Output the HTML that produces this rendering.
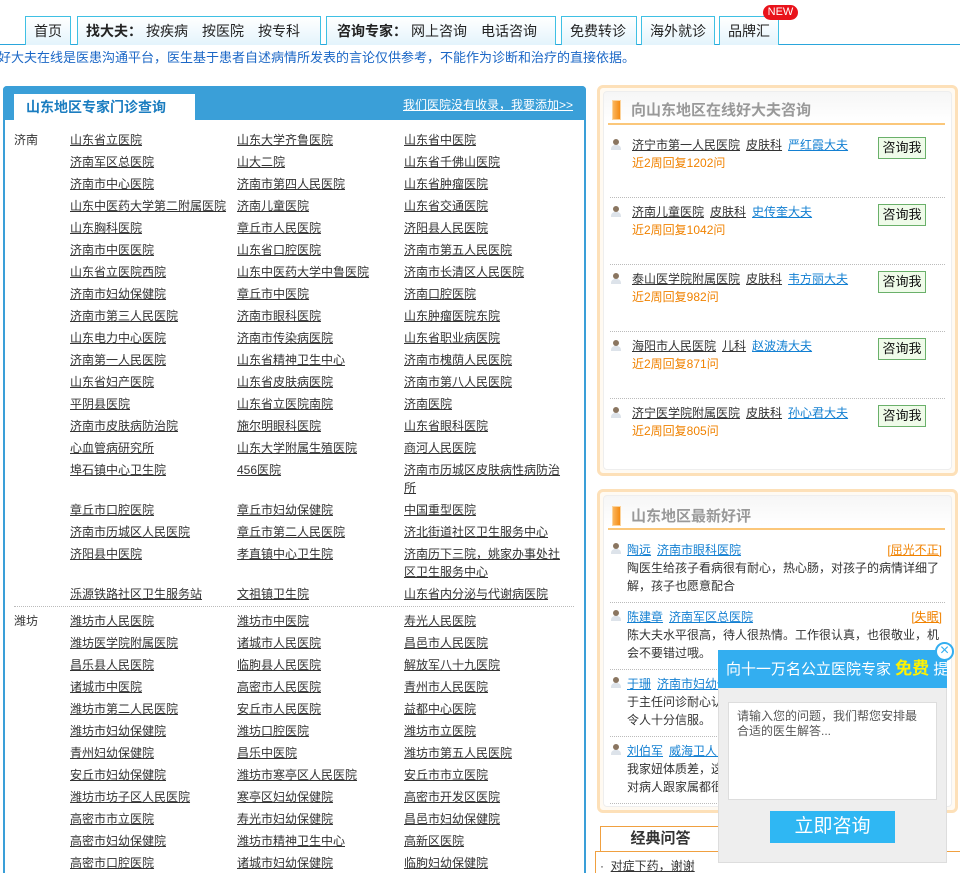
<!DOCTYPE html>
<html><head><meta charset="utf-8">
<style>
*{margin:0;padding:0;box-sizing:border-box}
html{width:960px;height:873px;overflow:hidden}
body{width:960px;height:873px;overflow:hidden;background:#fff;font-family:"Liberation Sans","Noto Sans CJK SC",sans-serif;font-size:12px;color:#333;position:relative}
.abs{position:absolute}
.nav{position:absolute;top:44px;left:0;width:960px;height:1px;background:#2aa6dc}
.tab{position:absolute;top:16px;height:29px;border:1px solid #3fc0e4;border-bottom:none;background:linear-gradient(#fff,#e4f4fc);font-size:14px;line-height:28px;color:#222;padding-left:8px;white-space:nowrap}
.tab b{font-weight:bold}
.tab span{margin-right:14px}
.new{position:absolute;left:763px;top:5px;width:35px;height:15px;background:#e9131b;border-radius:8px;color:#fff;font-size:11px;line-height:15px;text-align:center}
.disc{position:absolute;left:-2px;top:48px;font-size:13px;color:#1b67c6;line-height:20px;white-space:nowrap}
.lp{position:absolute;left:3px;top:86px;width:583px;height:830px;border:2px solid #3a9fd8;border-radius:4px;background:#fff}
.lph{position:absolute;left:3px;top:86px;width:583px;height:34px;background:#3a9fd8;border-radius:4px 4px 0 0}
.lpt{position:absolute;left:14px;top:94px;width:181px;height:27px;background:#fff;color:#1b7dc0;font-size:14px;font-weight:bold;line-height:27px;padding-left:12px}
.lpl{position:absolute;left:403px;top:96px;color:#fff;text-decoration:underline;font-size:12px}
.r{position:absolute;left:0;width:580px;height:18px;line-height:18px}
.r a{position:absolute;color:#333;text-decoration:underline}
.r .c1{left:70px}.r .c2{left:237px}.r .c3{left:404px;width:160px}
.lbl{position:absolute;left:14px;color:#333}
.sep{position:absolute;left:14px;top:606px;width:560px;border-top:1px dotted #bbb}
.rp{position:absolute;left:597px;width:361px;border:3px solid #fde0b8;border-radius:6px;background:#fffaf2}
.rpi{position:absolute;left:3px;top:3px;right:3px;bottom:3px;background:linear-gradient(#f6f6f6,#fff 30px);border:1px solid #eee;border-radius:4px}
.rh{position:absolute;left:612px;font-size:15px;font-weight:bold;color:#999}
.rh:before{content:"";position:absolute;left:0;top:1px;width:7px;height:18px;background:linear-gradient(90deg,#fbb65c,#f48a12);border:1px solid #fcd39c}
.rh span{margin-left:19px}
.hl{position:absolute;left:608px;width:337px;border-top:2px solid #fbc77a}
.it{position:absolute;left:632px;line-height:18px;white-space:nowrap}
.it a{color:#333;text-decoration:underline;margin-right:6px}
.it a.b{color:#1480d2}
.it .o{color:#f08200}
.av{position:absolute;left:611px;width:10px;height:12px}
.av:before{content:"";position:absolute;left:2px;top:0;width:6px;height:6px;border-radius:50%;background:#8a7560}
.av:after{content:"";position:absolute;left:0;top:6px;width:10px;height:5px;border-radius:4px 4px 0 0;background:#dde3ea}
.btn{position:absolute;left:878px;width:48px;height:22px;border:1px solid #6ab06a;background:#effbe9;font-size:13px;text-align:center;line-height:20px;color:#111}
.dot{position:absolute;left:610px;width:335px;border-top:1px dotted #bbb}
.rv{position:absolute;left:627px;width:318px;line-height:18px;font-size:12px}
.rv a{color:#1480d2;text-decoration:underline;margin-right:6px}
.rv .tag{position:absolute;right:3px;top:0;color:#f08200;text-decoration:underline}
.pop{position:absolute;left:718px;top:650px;width:229px;height:213px;background:#eee;border:1px solid #ddd}
.poph{position:absolute;left:718px;top:650px;width:229px;height:38px;background:#33aef0;color:#fff;font-size:15px;line-height:38px;padding-left:8px;white-space:nowrap;overflow:hidden}
.poph b{color:#fff200;font-size:17px}
.ta{position:absolute;left:728px;top:702px;width:209px;height:98px;background:#fff;border:1px solid #ddd;padding:6px 8px;font-size:12px;line-height:15px;color:#555}
.pb{position:absolute;left:770px;top:811px;width:125px;height:32px;background:#2fb7f3;color:#fff;font-size:19px;text-align:center;line-height:32px}
.cls{position:absolute;left:935px;top:642px;width:19px;height:19px;border-radius:50%;background:#fff;border:2px solid #33aef0;color:#33aef0;font-size:16px;line-height:14px;text-align:center}
</style></head><body>

<div class="nav"></div>
<div class="tab" style="left:25px;width:46px">首页</div>
<div class="tab" style="left:77px;width:244px;padding-left:8px"><b style="margin-right:4px">找大夫：</b><span>按疾病</span><span>按医院</span>按专科</div>
<div class="tab" style="left:326px;width:230px;padding-left:10px"><b style="margin-right:4px">咨询专家：</b><span>网上咨询</span>电话咨询</div>
<div class="tab" style="left:561px;width:76px">免费转诊</div>
<div class="tab" style="left:641px;width:74px">海外就诊</div>
<div class="tab" style="left:719px;width:60px">品牌汇</div>
<div class="new">NEW</div>
<div class="disc">好大夫在线是医患沟通平台，医生基于患者自述病情所发表的言论仅供参考，不能作为诊断和治疗的直接依据。</div>

<div class="lp"></div>
<div class="lph"></div>
<div class="lpt">山东地区专家门诊查询</div>
<div class="lpl">我们医院没有收录，我要添加&gt;&gt;</div>

<div class="lbl" style="top:131px">济南</div>
<div class="r" style="top:131px"><a class="c1">山东省立医院</a><a class="c2">山东大学齐鲁医院</a><a class="c3">山东省中医院</a></div>
<div class="r" style="top:153px"><a class="c1">济南军区总医院</a><a class="c2">山大二院</a><a class="c3">山东省千佛山医院</a></div>
<div class="r" style="top:175px"><a class="c1">济南市中心医院</a><a class="c2">济南市第四人民医院</a><a class="c3">山东省肿瘤医院</a></div>
<div class="r" style="top:197px"><a class="c1">山东中医药大学第二附属医院</a><a class="c2">济南儿童医院</a><a class="c3">山东省交通医院</a></div>
<div class="r" style="top:219px"><a class="c1">山东胸科医院</a><a class="c2">章丘市人民医院</a><a class="c3">济阳县人民医院</a></div>
<div class="r" style="top:241px"><a class="c1">济南市中医医院</a><a class="c2">山东省口腔医院</a><a class="c3">济南市第五人民医院</a></div>
<div class="r" style="top:263px"><a class="c1">山东省立医院西院</a><a class="c2">山东中医药大学中鲁医院</a><a class="c3">济南市长清区人民医院</a></div>
<div class="r" style="top:285px"><a class="c1">济南市妇幼保健院</a><a class="c2">章丘市中医院</a><a class="c3">济南口腔医院</a></div>
<div class="r" style="top:307px"><a class="c1">济南市第三人民医院</a><a class="c2">济南市眼科医院</a><a class="c3">山东肿瘤医院东院</a></div>
<div class="r" style="top:329px"><a class="c1">山东电力中心医院</a><a class="c2">济南市传染病医院</a><a class="c3">山东省职业病医院</a></div>
<div class="r" style="top:351px"><a class="c1">济南第一人民医院</a><a class="c2">山东省精神卫生中心</a><a class="c3">济南市槐荫人民医院</a></div>
<div class="r" style="top:373px"><a class="c1">山东省妇产医院</a><a class="c2">山东省皮肤病医院</a><a class="c3">济南市第八人民医院</a></div>
<div class="r" style="top:395px"><a class="c1">平阴县医院</a><a class="c2">山东省立医院南院</a><a class="c3">济南医院</a></div>
<div class="r" style="top:417px"><a class="c1">济南市皮肤病防治院</a><a class="c2">施尔明眼科医院</a><a class="c3">山东省眼科医院</a></div>
<div class="r" style="top:439px"><a class="c1">心血管病研究所</a><a class="c2">山东大学附属生殖医院</a><a class="c3">商河人民医院</a></div>
<div class="r" style="top:461px"><a class="c1">埠石镇中心卫生院</a><a class="c2">456医院</a><a class="c3">济南市历城区皮肤病性病防治所</a></div>
<div class="r" style="top:501px"><a class="c1">章丘市口腔医院</a><a class="c2">章丘市妇幼保健院</a><a class="c3">中国重型医院</a></div>
<div class="r" style="top:523px"><a class="c1">济南市历城区人民医院</a><a class="c2">章丘市第二人民医院</a><a class="c3">济北街道社区卫生服务中心</a></div>
<div class="r" style="top:545px"><a class="c1">济阳县中医院</a><a class="c2">孝直镇中心卫生院</a><a class="c3">济南历下三院，姚家办事处社区卫生服务中心</a></div>
<div class="r" style="top:585px"><a class="c1">泺源铁路社区卫生服务站</a><a class="c2">文祖镇卫生院</a><a class="c3">山东省内分泌与代谢病医院</a></div>
<div class="sep"></div>
<div class="lbl" style="top:612px">潍坊</div>
<div class="r" style="top:612px"><a class="c1">潍坊市人民医院</a><a class="c2">潍坊市中医院</a><a class="c3">寿光人民医院</a></div>
<div class="r" style="top:634px"><a class="c1">潍坊医学院附属医院</a><a class="c2">诸城市人民医院</a><a class="c3">昌邑市人民医院</a></div>
<div class="r" style="top:656px"><a class="c1">昌乐县人民医院</a><a class="c2">临朐县人民医院</a><a class="c3">解放军八十九医院</a></div>
<div class="r" style="top:678px"><a class="c1">诸城市中医院</a><a class="c2">高密市人民医院</a><a class="c3">青州市人民医院</a></div>
<div class="r" style="top:700px"><a class="c1">潍坊市第二人民医院</a><a class="c2">安丘市人民医院</a><a class="c3">益都中心医院</a></div>
<div class="r" style="top:722px"><a class="c1">潍坊市妇幼保健院</a><a class="c2">潍坊口腔医院</a><a class="c3">潍坊市立医院</a></div>
<div class="r" style="top:744px"><a class="c1">青州妇幼保健院</a><a class="c2">昌乐中医院</a><a class="c3">潍坊市第五人民医院</a></div>
<div class="r" style="top:766px"><a class="c1">安丘市妇幼保健院</a><a class="c2">潍坊市寒亭区人民医院</a><a class="c3">安丘市市立医院</a></div>
<div class="r" style="top:788px"><a class="c1">潍坊市坊子区人民医院</a><a class="c2">寒亭区妇幼保健院</a><a class="c3">高密市开发区医院</a></div>
<div class="r" style="top:810px"><a class="c1">高密市市立医院</a><a class="c2">寿光市妇幼保健院</a><a class="c3">昌邑市妇幼保健院</a></div>
<div class="r" style="top:832px"><a class="c1">高密市妇幼保健院</a><a class="c2">潍坊市精神卫生中心</a><a class="c3">高新区医院</a></div>
<div class="r" style="top:854px"><a class="c1">高密市口腔医院</a><a class="c2">诸城市妇幼保健院</a><a class="c3">临朐妇幼保健院</a></div>

<div class="rp" style="top:85px;height:391px"><div class="rpi"></div></div>
<div class="rh" style="top:99px"><span>向山东地区在线好大夫咨询</span></div>
<div class="hl" style="top:123px"></div>

<div class="av" style="top:139px"></div>
<div class="it" style="top:136px"><a>济宁市第一人民医院</a><a>皮肤科</a><a class="b">严红霞大夫</a><br><span class="o">近2周回复1202问</span></div>
<div class="btn" style="top:137px">咨询我</div>
<div class="dot" style="top:197px"></div>
<div class="av" style="top:206px"></div>
<div class="it" style="top:203px"><a>济南儿童医院</a><a>皮肤科</a><a class="b">史传奎大夫</a><br><span class="o">近2周回复1042问</span></div>
<div class="btn" style="top:204px">咨询我</div>
<div class="dot" style="top:264px"></div>
<div class="av" style="top:273px"></div>
<div class="it" style="top:270px"><a>泰山医学院附属医院</a><a>皮肤科</a><a class="b">韦方丽大夫</a><br><span class="o">近2周回复982问</span></div>
<div class="btn" style="top:271px">咨询我</div>
<div class="dot" style="top:331px"></div>
<div class="av" style="top:340px"></div>
<div class="it" style="top:337px"><a>海阳市人民医院</a><a>儿科</a><a class="b">赵波涛大夫</a><br><span class="o">近2周回复871问</span></div>
<div class="btn" style="top:338px">咨询我</div>
<div class="dot" style="top:398px"></div>
<div class="av" style="top:407px"></div>
<div class="it" style="top:404px"><a>济宁医学院附属医院</a><a>皮肤科</a><a class="b">孙心君大夫</a><br><span class="o">近2周回复805问</span></div>
<div class="btn" style="top:405px">咨询我</div>

<div class="rp" style="top:489px;height:324px"><div class="rpi"></div></div>
<div class="rh" style="top:505px"><span>山东地区最新好评</span></div>
<div class="hl" style="top:528px"></div>
<div class="av" style="top:543px"></div>
<div class="rv" style="top:541px"><a>陶远</a><a>济南市眼科医院</a><span class="tag">[屈光不正]</span><br>陶医生给孩子看病很有耐心，热心肠，对孩子的病情详细了解，孩子也愿意配合</div>
<div class="dot" style="top:602px"></div>
<div class="av" style="top:610px"></div>
<div class="rv" style="top:608px"><a>陈建章</a><a>济南军区总医院</a><span class="tag">[失眠]</span><br>陈大夫水平很高，待人很热情。工作很认真，也很敬业，机会不要错过哦。</div>
<div class="dot" style="top:669px"></div>
<div class="av" style="top:677px"></div>
<div class="rv" style="top:675px"><a>于珊</a><a>济南市妇幼保健院</a><br>于主任问诊耐心认真，开药也很合理，效果很好，很实用，令人十分信服。</div>
<div class="dot" style="top:736px"></div>
<div class="av" style="top:744px"></div>
<div class="rv" style="top:742px"><a>刘伯军</a><a>威海卫人民医院</a><br>我家妞体质差，这次多亏了刘大夫，刘大夫人很好，老爷爷对病人跟家属都很耐心。</div>
<div class="dot" style="top:803px"></div>

<div class="abs" style="left:600px;top:826px;width:121px;height:26px;border:1px solid #f0a040;border-bottom:none;background:#fff;text-align:center;font-size:15px;font-weight:bold;line-height:24px;color:#333">经典问答</div>
<div class="abs" style="left:595px;top:851px;width:370px;border-top:1px solid #f0a040"></div>
<div class="abs" style="left:595px;top:851px;height:30px;border-left:1px solid #f0a040"></div>
<div class="abs" style="left:600px;top:857px;line-height:18px">·&nbsp; <span style="text-decoration:underline">对症下药，谢谢</span></div>

<div class="pop"></div>
<div class="poph">向十一万名公立医院专家 <b>免费</b> 提问</div>
<div class="ta">请输入您的问题，我们帮您安排最合适的医生解答...</div>
<div class="pb">立即咨询</div>
<div class="cls">×</div>
</body></html>
